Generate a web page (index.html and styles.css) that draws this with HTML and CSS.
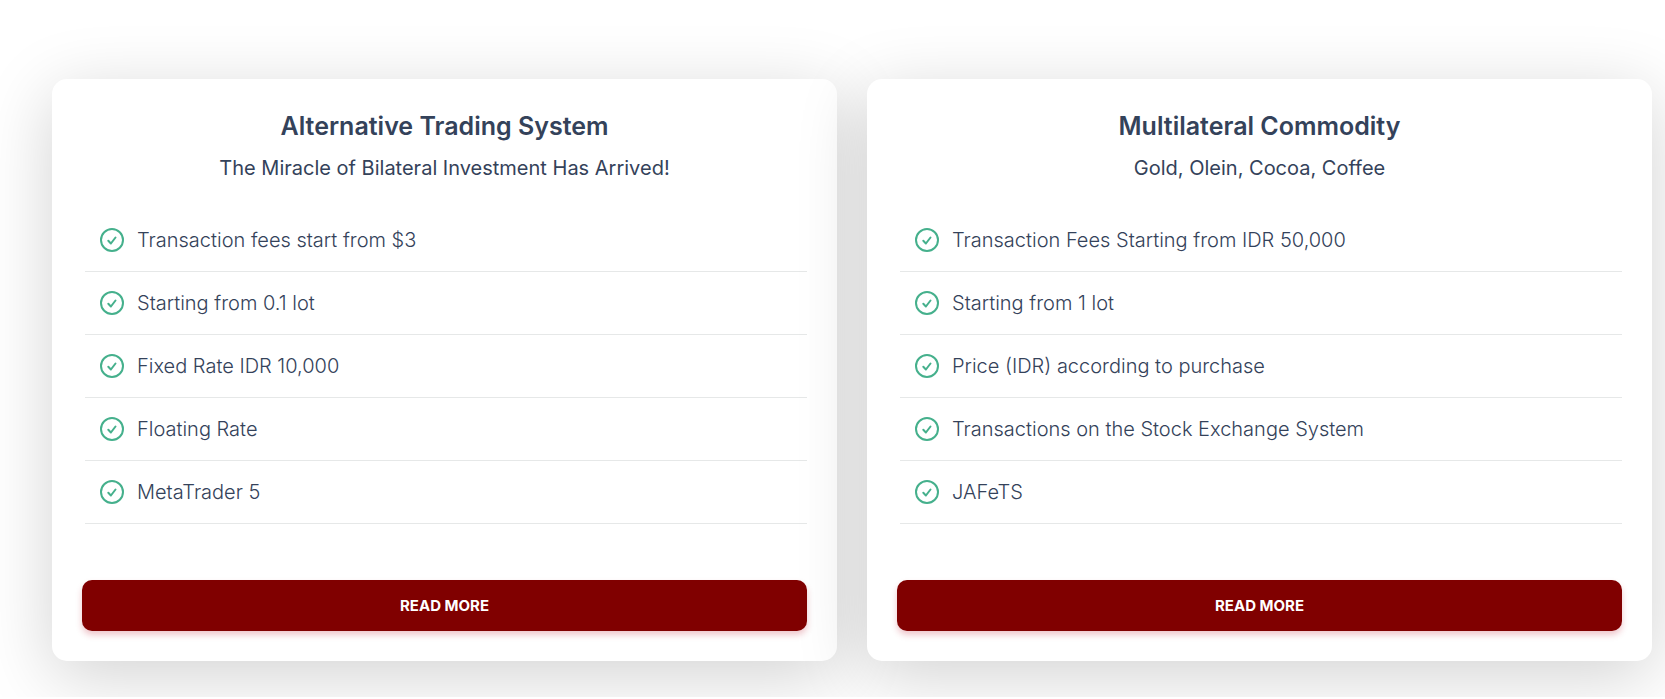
FILE: index.html
```html
<!DOCTYPE html>
<html lang="en">
<head>
    <meta charset="UTF-8">
    <meta name="viewport" content="width=device-width, initial-scale=1.0">
    <title>Products</title>
    <link rel="stylesheet" href="styles.css">
</head>
<body>

    <!-- Check icon shared by both lists -->
    <svg class="sprite" aria-hidden="true">
        <symbol id="check" viewBox="0 0 24 24">
            <circle cx="12" cy="12" r="11" />
            <path d="M8.3 12.8l2.6 2.7 4.6-6" />
        </symbol>
    </svg>

    <main class="products">
        <section class="card">
            <h2>Alternative Trading System</h2>
            <p class="subtitle">The Miracle of Bilateral Investment Has Arrived!</p>
            <ul class="features">
                <li><svg class="icon"><use href="#check" /></svg>Transaction fees start from $3</li>
                <li><svg class="icon"><use href="#check" /></svg>Starting from 0.1 lot</li>
                <li><svg class="icon"><use href="#check" /></svg>Fixed Rate IDR 10,000</li>
                <li><svg class="icon"><use href="#check" /></svg>Floating Rate</li>
                <li><svg class="icon"><use href="#check" /></svg>MetaTrader 5</li>
            </ul>
            <a class="btn" href="#">READ MORE</a>
        </section>

        <section class="card">
            <h2>Multilateral Commodity</h2>
            <p class="subtitle">Gold, Olein, Cocoa, Coffee</p>
            <ul class="features">
                <li><svg class="icon"><use href="#check" /></svg>Transaction Fees Starting from IDR 50,000</li>
                <li><svg class="icon"><use href="#check" /></svg>Starting from 1 lot</li>
                <li><svg class="icon"><use href="#check" /></svg>Price (IDR) according to purchase</li>
                <li><svg class="icon"><use href="#check" /></svg>Transactions on the Stock Exchange System</li>
                <li><svg class="icon"><use href="#check" /></svg>JAFeTS</li>
            </ul>
            <a class="btn" href="#">READ MORE</a>
        </section>
    </main>

</body>
</html>
```
FILE: styles.css
```css
* {
    box-sizing: border-box;
}

body {
    margin: 0;
    font-family: Inter, sans-serif;
    background-color: #fff;
    color: #34425a;
    overflow-x: hidden;
}

.sprite {
    display: none;
}

.products {
    display: grid;
    grid-template-columns: 1fr 1fr;
    gap: 30px;
    padding: 79px 13px 36px 52px;
}

.card {
    display: flex;
    flex-direction: column;
    padding: 30px;
    background-color: #fff;
    border-radius: 15px;
    box-shadow: 0 15px 70px rgba(0, 0, 0, 0.18);
}

h2 {
    margin: 0;
    font-size: 25px;
    font-weight: 600;
    line-height: 34px;
    text-align: center;
}

.subtitle {
    margin: 9px 0 25px;
    font-size: 20px;
    line-height: 32px;
    text-align: center;
}

.features {
    list-style: none;
    margin: 0 0 56px 3px;
    padding: 0;
}

.features li {
    display: flex;
    align-items: center;
    gap: 13px;
    height: 63px;
    padding-left: 15px;
    border-bottom: 1px solid #e6e8e8;
    font-size: 20px;
    font-weight: 300;
}

.icon {
    width: 24px;
    height: 24px;
    fill: none;
    stroke: #45b08c;
    stroke-width: 2;
    stroke-linecap: round;
    stroke-linejoin: round;
}

.btn {
    display: block;
    border-radius: 10px;
    background-color: #800000;
    box-shadow: 0 4px 6px rgba(190, 30, 50, 0.25);
    color: #fff;
    font-size: 15px;
    font-weight: 700;
    line-height: 51px;
    text-align: center;
    text-decoration: none;
}

.btn:hover {
    background-color: #990000;
}

@media (max-width: 800px) {
    .products {
        grid-template-columns: 1fr;
    }
}
```
